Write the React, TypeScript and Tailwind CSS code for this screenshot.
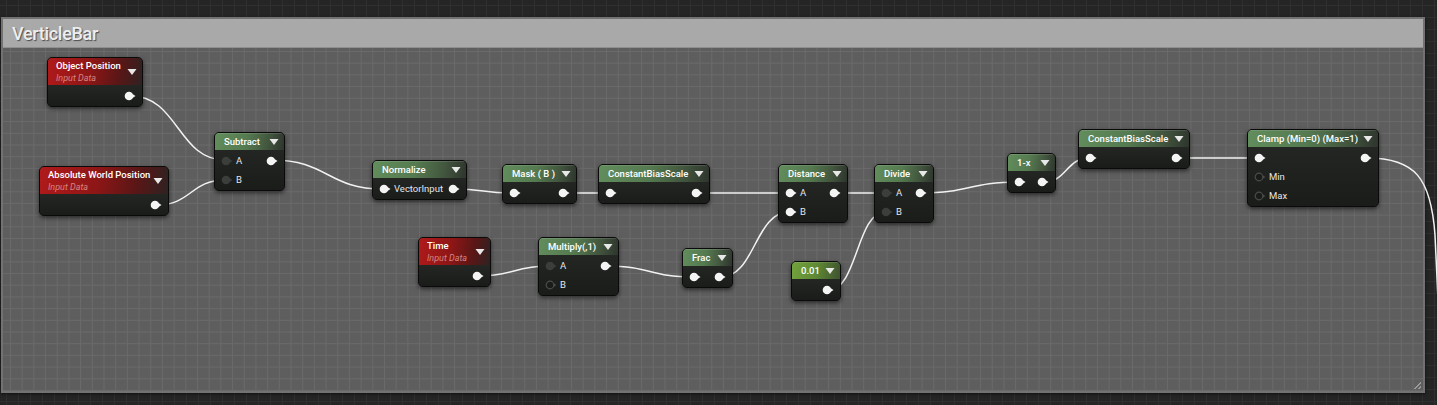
import React from "react";

type PinKind = "on" | "dark" | "ring";
type NodeDef = {
  title: string;
  x: number;
  y: number;
  w: number;
  color: "green" | "red" | "const";
  inputs: { label?: string; kind: PinKind }[];
  out: boolean;
};

const nodes: NodeDef[] = [
  { title: "Object Position", x: 47, y: 57, w: 96, color: "red", inputs: [], out: true },
  { title: "Absolute World Position", x: 39, y: 166, w: 130, color: "red", inputs: [], out: true },
  { title: "Subtract", x: 214, y: 132, w: 71, color: "green", inputs: [{ label: "A", kind: "dark" }, { label: "B", kind: "dark" }], out: true },
  { title: "Normalize", x: 372, y: 160, w: 95, color: "green", inputs: [{ label: "VectorInput", kind: "on" }], out: true },
  { title: "Mask ( B )", x: 502, y: 164, w: 75, color: "green", inputs: [{ kind: "on" }], out: true },
  { title: "ConstantBiasScale", x: 598, y: 164, w: 112, color: "green", inputs: [{ kind: "on" }], out: true },
  { title: "Distance", x: 778, y: 164, w: 70, color: "green", inputs: [{ label: "A", kind: "on" }, { label: "B", kind: "on" }], out: true },
  { title: "Divide", x: 874, y: 164, w: 60, color: "green", inputs: [{ label: "A", kind: "dark" }, { label: "B", kind: "dark" }], out: true },
  { title: "1-x", x: 1007, y: 153, w: 49, color: "green", inputs: [{ kind: "on" }], out: true },
  { title: "ConstantBiasScale", x: 1078, y: 129, w: 112, color: "green", inputs: [{ kind: "on" }], out: true },
  { title: "Clamp (Min=0) (Max=1)", x: 1247, y: 129, w: 132, color: "green", inputs: [{ kind: "on" }, { label: "Min", kind: "ring" }, { label: "Max", kind: "ring" }], out: true },
  { title: "Time", x: 418, y: 237, w: 73, color: "red", inputs: [], out: true },
  { title: "Multiply(,1)", x: 538, y: 237, w: 81, color: "green", inputs: [{ label: "A", kind: "dark" }, { label: "B", kind: "ring" }], out: true },
  { title: "Frac", x: 682, y: 248, w: 51, color: "green", inputs: [{ kind: "on" }], out: true },
  { title: "0.01", x: 791, y: 261, w: 50, color: "const", inputs: [], out: true },
];

const wires: [number, number, number, number][] = [
  [131, 96, 225, 160],
  [157, 205, 225, 180],
  [272, 160, 383, 189],
  [454, 189, 513, 193],
  [565, 193, 609, 193],
  [698, 193, 789, 193],
  [479, 276, 549, 266],
  [607, 266, 693, 277],
  [721, 277, 789, 212],
  [836, 193, 885, 193],
  [829, 290, 885, 212],
  [921, 193, 1018, 182],
  [1044, 182, 1089, 158],
  [1178, 158, 1258, 158],
];

function wirePath(x1: number, y1: number, x2: number, y2: number) {
  const dx = Math.max(Math.abs(x2 - x1) * 0.5, 20);
  return `M${x1},${y1} C${x1 + dx},${y1} ${x2 - dx},${y2} ${x2},${y2}`;
}

function Pin({ kind }: { kind: PinKind }) {
  if (kind === "on") {
    return (
      <svg width="12" height="10" viewBox="0 0 12 10" className="shrink-0">
        <circle cx="5" cy="5" r="4.3" fill="#f4f4f4" />
        <polygon points="8.5,3 11.5,5 8.5,7" fill="#f4f4f4" />
      </svg>
    );
  }
  if (kind === "dark") {
    return (
      <svg width="12" height="10" viewBox="0 0 12 10" className="shrink-0">
        <circle cx="5" cy="5" r="4.3" fill="#3c3e3c" />
        <polygon points="8.5,3 11.5,5 8.5,7" fill="#3c3e3c" />
      </svg>
    );
  }
  return (
    <svg width="12" height="10" viewBox="0 0 12 10" className="shrink-0">
      <circle cx="5" cy="5" r="3.8" fill="#1a1b1a" stroke="#4a4c4a" strokeWidth="1.2" />
      <polygon points="9,3.5 11.5,5 9,6.5" fill="#4a4c4a" />
    </svg>
  );
}

function Arrow() {
  return (
    <svg width="10" height="8" viewBox="0 0 10 8" className="shrink-0">
      <polygon points="0.5,1 9.5,1 5,7" fill="#e8e8e8" />
    </svg>
  );
}

function GraphNode({ n }: { n: NodeDef }) {
  const rows = Math.max(n.inputs.length, 1);
  const headerBg =
    n.color === "red"
      ? "bg-[linear-gradient(100deg,#b01a1a_0%,#8e1616_45%,#5a1616_75%,#2e2222_100%)]"
      : n.color === "const"
      ? "bg-[linear-gradient(100deg,#73a23c_0%,#5f8a34_50%,#3e5230_100%)]"
      : "bg-[linear-gradient(100deg,#628d5c_0%,#557a50_45%,#43573f_75%,#2e352d_100%)]";
  return (
    <div
      className="absolute rounded-[5px] border border-[#0a0a0a] overflow-hidden shadow-[0_2px_4px_rgba(0,0,0,0.55)] bg-[#1d201d]"
      style={{ left: n.x, top: n.y, width: n.w }}
    >
      {n.color === "red" ? (
        <div className={`${headerBg} h-[27px] flex items-center pl-[8px] pr-[5px]`}>
          <div className="flex-1 flex flex-col pt-[1px]">
            <span className="text-[9.5px] leading-[12px] font-medium text-white whitespace-nowrap">{n.title}</span>
            <span className="text-[9px] leading-[12px] italic text-[#d48484] whitespace-nowrap">Input Data</span>
          </div>
          <Arrow />
        </div>
      ) : (
        <div className={`${headerBg} h-[17px] flex items-center pl-[9px] pr-[5px] shadow-[inset_0_1px_0_rgba(255,255,255,0.12)]`}>
          <span className="flex-1 text-[9.5px] leading-[12px] font-medium text-white whitespace-nowrap">{n.title}</span>
          <Arrow />
        </div>
      )}
      <div className="pt-[1px] pb-[1px] bg-[linear-gradient(180deg,#232623,#1a1c1a)]">
        {Array.from({ length: rows }).map((_, i) => {
          const inp = n.inputs[i];
          return (
            <div key={i} className="h-[19px] flex items-center justify-between pl-[6px] pr-[6px]">
              <div className="flex items-center gap-[3px]">
                {inp ? <Pin kind={inp.kind} /> : null}
                {inp && inp.label ? (
                  <span className="text-[9.5px] text-[#e6e6e6] leading-[12px]">{inp.label}</span>
                ) : null}
              </div>
              {i === 0 && n.out ? <Pin kind="on" /> : null}
            </div>
          );
        })}
      </div>
    </div>
  );
}

export default function App() {
  return (
    <div
      className="relative w-[1437px] h-[405px] overflow-hidden bg-[#252525] bg-[linear-gradient(#2f2f2f_1px,transparent_1px),linear-gradient(90deg,#2f2f2f_1px,transparent_1px)] bg-[size:12px_12px] bg-[position:6px_5px] pt-[17px] pl-[1px]"
      style={{ fontFamily: "Roboto, 'Noto Sans', sans-serif" }}
    >
      {/* Comment box */}
      <div className="w-[1424px] h-[376px] bg-[#727272] p-[2px] flex flex-col shadow-[0_1px_3px_rgba(0,0,0,0.6)]">
        <div className="h-[29px] bg-[#a9a9a9] flex items-center pl-[9px] shadow-[inset_0_-1px_0_rgba(0,0,0,0.15)]">
          <span className="text-[18px] font-medium text-[#eeeeee] tracking-[-0.3px] [text-shadow:1px_1px_1px_rgba(0,0,0,0.55)]">
            VerticleBar
          </span>
        </div>
        <div className="relative flex-1 bg-[#5e5e5e] bg-[linear-gradient(#6a6a6a_1px,transparent_1px),linear-gradient(90deg,#6a6a6a_1px,transparent_1px)] bg-[size:11.7px_11.7px] bg-[position:7px_3px]">
          <div className="absolute right-[2px] bottom-[2px] w-[10px] h-[10px] bg-[repeating-linear-gradient(135deg,#9a9a9a_0px,#9a9a9a_1px,transparent_1px,transparent_3px)] [clip-path:polygon(100%_0,100%_100%,0_100%)]" />
        </div>
      </div>

      {/* Graph layer: wires and nodes on the canvas */}
      <div className="absolute inset-0">
        <svg className="absolute inset-0" width="1437" height="405">
          {wires.map(([a, b, c, d], i) => (
            <path key={i} d={wirePath(a, b, c, d)} stroke="#f2f2f2" strokeWidth="1.5" fill="none" />
          ))}
          <path d="M1367,158 C1415,158 1431,178 1435,235 L1438,300" stroke="#f2f2f2" strokeWidth="1.5" fill="none" />
        </svg>
        {nodes.map((n, i) => (
          <GraphNode key={i} n={n} />
        ))}
      </div>
    </div>
  );
}
